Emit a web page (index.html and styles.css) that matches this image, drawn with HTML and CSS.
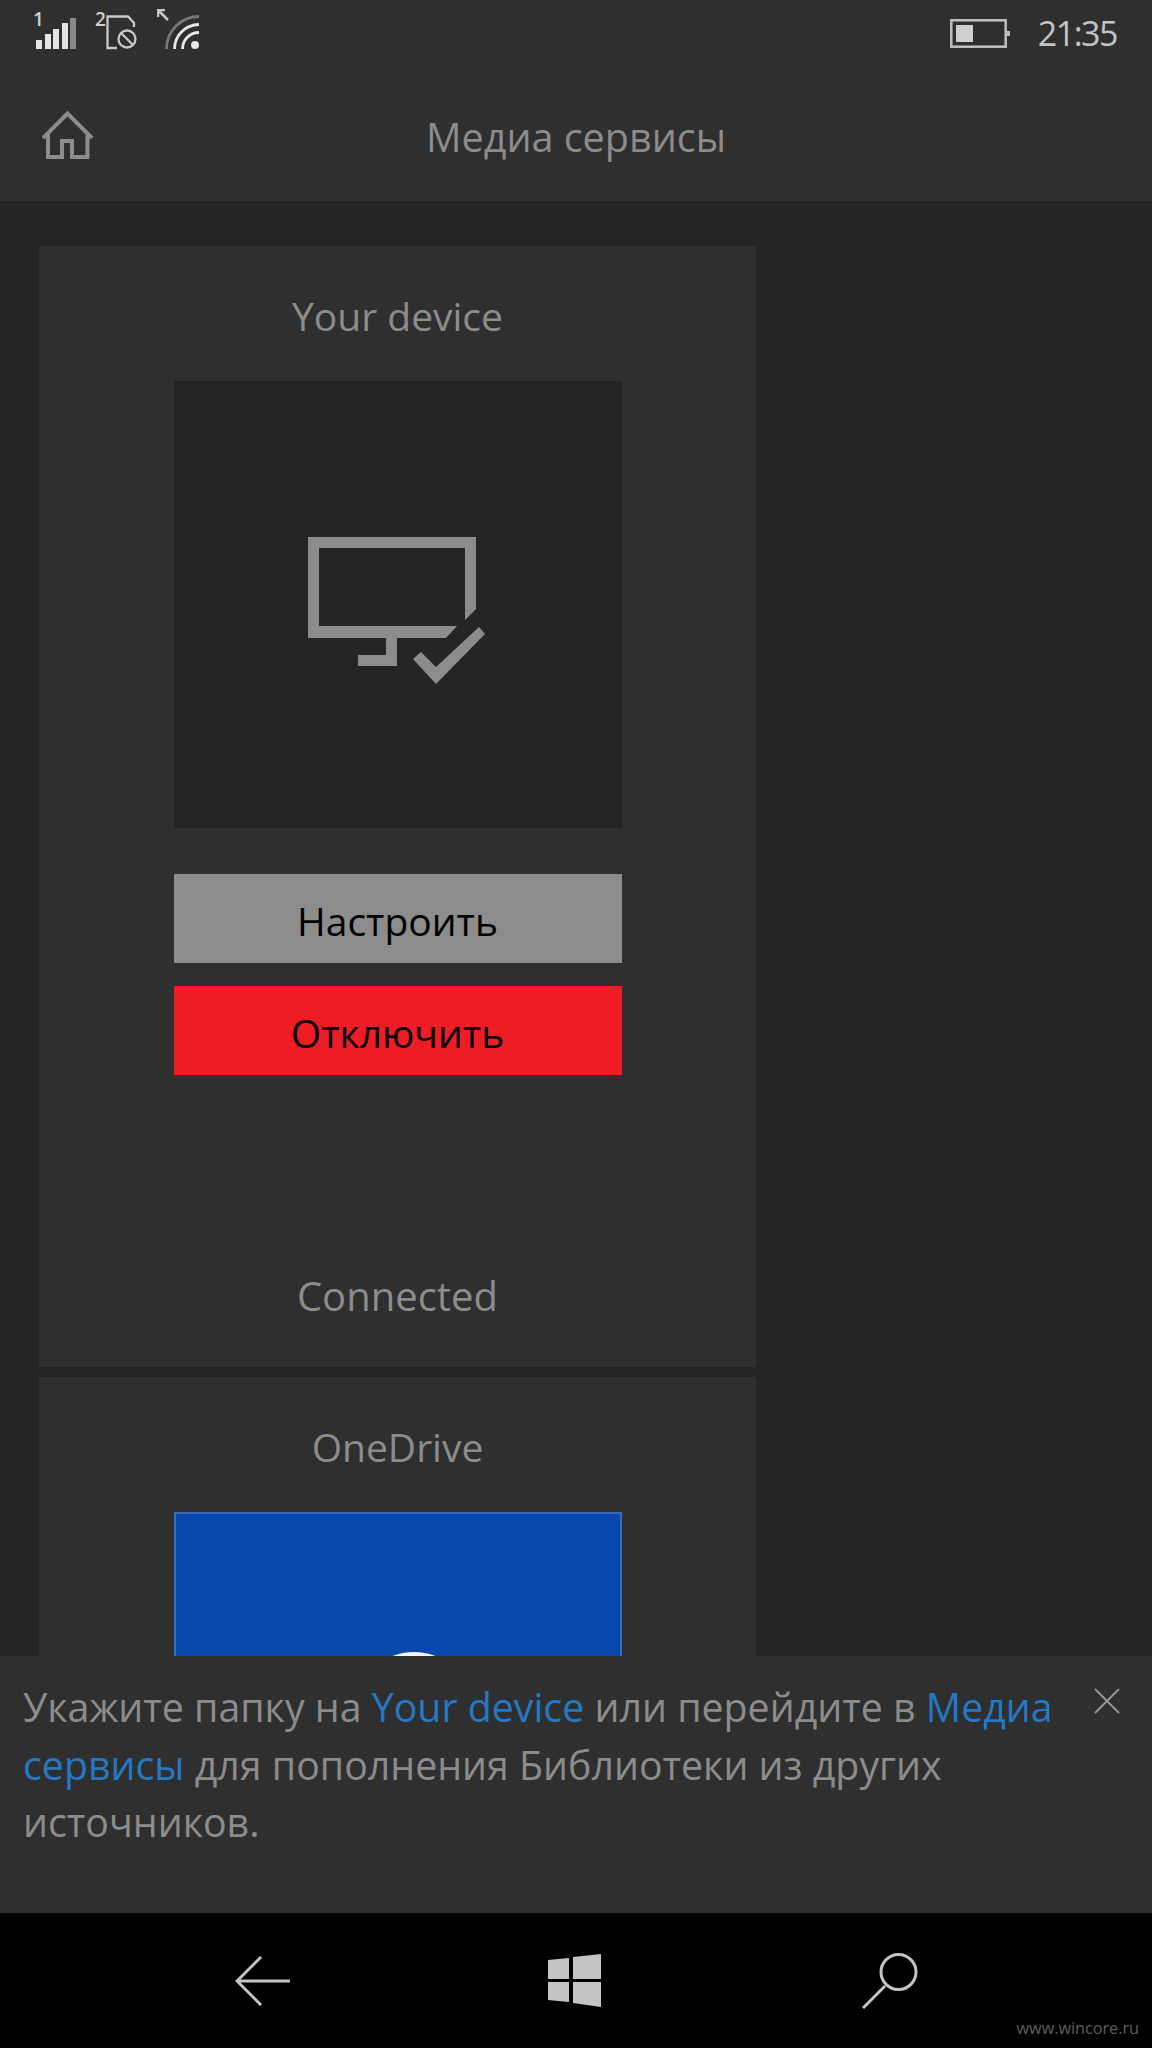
FILE: index.html
```html
<!DOCTYPE html>
<html lang="ru">
<head>
<meta charset="utf-8">
<title>Медиа сервисы</title>
<link rel="stylesheet" href="styles.css">
</head>
<body>
<div class="phone">
  <header class="top">
    <div class="status">
      <div class="status-left">
        <div class="sig">
          <span class="num">1</span>
          <svg width="40" height="31" viewBox="0 0 40 31"><g fill="#e4e4e4"><rect x="0" y="22" width="6" height="9"/><rect x="9" y="16" width="6" height="15"/><rect x="17" y="11" width="6" height="20"/><rect x="26" y="5" width="6" height="26"/></g><rect x="34" y="0" width="6" height="31" fill="#8a8a8a"/></svg>
        </div>
        <div class="sig sim">
          <span class="num">2</span>
          <svg width="32" height="35" viewBox="0 0 32 35" fill="none" stroke="#c8c8c8" stroke-width="2.300"><path d="M11 33H1.500V1.500H22L28 8V12"/><circle cx="21" cy="24" r="8.500"/><path d="M15 18L27 30"/></svg>
        </div>
        <div class="wifi">
          <svg width="42" height="40" viewBox="0 0 42 40" fill="none"><path d="M1 1L11 11M1 8V1H8" stroke="#c8c8c8" stroke-width="2.500"/><path d="M42 7.500A32.500 32.500 0 0 0 9.500 40" stroke="#777" stroke-width="2.800"/><path d="M42 15.500A24.500 24.500 0 0 0 17.500 40" stroke="#e6e6e6" stroke-width="2.800"/><path d="M42 23.500A16.500 16.500 0 0 0 25.500 40" stroke="#e6e6e6" stroke-width="2.800"/><circle cx="38" cy="36" r="4" fill="#e6e6e6"/></svg>
        </div>
      </div>
      <div class="status-right">
        <svg width="60" height="29" viewBox="0 0 60 29"><rect x="1.300" y="1.300" width="54.400" height="26.400" fill="none" stroke="#c0c0c0" stroke-width="2.500"/><rect x="6" y="6" width="17" height="17" fill="#cfcfcf"/><rect x="57" y="12" width="3" height="5" fill="#c0c0c0"/></svg>
        <span class="clock">21:35</span>
      </div>
    </div>
    <div class="titlebar">
      <svg class="home" width="52" height="48" viewBox="0 0 52 48" fill="none" stroke="#8c8c8c" stroke-width="4"><path d="M1 27L25.500 2.500L50 27"/><path d="M6 22.500V46H20V30H30V46H45.500V22.500"/></svg>
      <h1 class="page-title">Медиа сервисы</h1>
    </div>
  </header>

  <main class="content">
    <section class="card card-device">
      <h2 class="card-title">Your device</h2>
      <div class="tile">
        <svg width="178" height="148" viewBox="0 0 178 148" fill="#8c8c8c"><path d="M0 0H168V72L157 83V11H11V89H149L138 101H89V129H50V118H78V101H0Z"/><path d="M105 122L113 115L128 130L171 90L177 97L128 147Z"/></svg>
      </div>
      <div class="btn btn-grey">Настроить</div>
      <div class="btn btn-red">Отключить</div>
      <div class="card-state">Connected</div>
    </section>
    <section class="card">
      <h2 class="card-title">OneDrive</h2>
      <div class="tile tile-blue"><span class="cloud"></span></div>
    </section>
  </main>

  <aside class="notice">
    <p class="notice-text">Укажите папку на <a class="lnk">Your device</a> или перейдите в <a class="lnk">Медиа</a> <a class="lnk">сервисы</a> <span>для пополнения Библиотеки из других</span> <span>источников.</span></p>
    <svg class="close" width="26" height="26" viewBox="0 0 26 26" stroke="#9a9a9a" stroke-width="1.800"><path d="M1 1L25 25M25 1L1 25"/></svg>
  </aside>

  <nav class="navbar">
    <svg width="55" height="50" viewBox="0 0 55 50" fill="none" stroke="#c4c4c4" stroke-width="3"><path d="M26 1L2 25L26 49M2 25H55"/></svg>
    <svg class="nav-win" width="53" height="53" viewBox="0 0 53 53" fill="#c4c4c4"><path d="M0 6L21 4V25H0ZM25 3L53 0V25H25ZM0 28H21V48L0 46ZM25 28H53V53L25 49Z"/></svg>
    <svg class="nav-search" width="56" height="56" viewBox="0 0 56 56" fill="none" stroke="#c4c4c4" stroke-width="3"><circle cx="36.500" cy="19" r="17.500"/><path d="M23 33L1 55"/></svg>
  </nav>
  <span class="watermark">www.wincore.ru</span>
</div>
</body>
</html>
```
FILE: styles.css
```css
* { box-sizing: border-box; }
html, body { margin: 0; padding: 0; background: #000; }
body { font-family: "Open Sans", "Noto Sans", sans-serif; }
.phone { position: relative; width: 1152px; height: 2048px; display: flex; flex-direction: column; overflow: hidden; background: #252525; }
.top { height: 201px; flex: none; background: #2f2f2f; }
.status { height: 66px; display: flex; justify-content: space-between; padding: 10px 35px 0 33px; }
.status-left { display: flex; gap: 16px; }
.sig { position: relative; width: 46px; height: 40px; padding: 8px 0 0 3px; }
.sim { padding: 5px 0 0 11px; }
.num { position: absolute; left: 0; top: -3px; font-size: 19px; font-weight: 600; color: #d0d0d0; line-height: 24px; }
.wifi { margin-top: -1px; }
.status-right { display: flex; align-items: flex-start; gap: 28px; padding-top: 9px; }
.clock { font-size: 34px; line-height: 40px; letter-spacing: -1.500px; color: #c4c4c4; margin-top: -6px; }
.titlebar { position: relative; height: 135px; display: flex; align-items: center; justify-content: center; padding-top: 6px; }
.home { position: absolute; left: 42px; top: 45px; }
.page-title { margin: 0; font-size: 39.500px; font-weight: 400; color: #8c8c8c; line-height: 50px; }
.content { flex: 1; min-height: 0; overflow: hidden; padding: 45px 0 0 39px; display: flex; flex-direction: column; gap: 10px; }
.card { flex: none; width: 717px; background: #2f2f2f; display: flex; flex-direction: column; align-items: center; }
.card-device { height: 1121px; }
.card-title { margin: 45px 0 0; height: 90px; font-size: 39px; font-weight: 400; line-height: 50px; color: #8c8c8c; }
.tile { width: 448px; height: 447px; flex: none; background: #252525; display: flex; align-items: center; justify-content: center; }
.tile svg { margin-left: -2px; margin-top: 12px; }
.btn { width: 448px; height: 89px; flex: none; display: flex; align-items: center; justify-content: center; padding-top: 3px; font-size: 39px; color: #000; }
.btn-grey { margin-top: 46px; background: #8c8c8c; }
.btn-red { margin-top: 23px; background: #ee1c25; }
.card-state { margin-top: 196px; font-size: 40px; line-height: 50px; color: #8c8c8c; }
.tile-blue { position: relative; background: #0848ad; border: 2px solid #3a6cbd; border-width: 2px 2px 0; overflow: hidden; }
.cloud { position: absolute; left: 178px; top: 138px; width: 120px; height: 120px; border-radius: 50%; background: #f2f4fa; }
.notice { position: relative; flex: none; height: 257px; background: #2f2f2f; padding: 23px 80px 0 23px; }
.notice-text { margin: 0; font-size: 39.300px; line-height: 57.500px; color: #8c8c8c; }
.lnk { color: #2578c4; }
.close { position: absolute; left: 1094px; top: 32px; }
.navbar { flex: none; height: 135px; background: #000; position: relative; display: flex; align-items: center; gap: 258px; padding-left: 235px; }
.nav-search { margin-left: 3px; }
.watermark { position: absolute; right: 13px; bottom: 9px; font-size: 16.200px; line-height: 22px; color: #5e5e5e; }
```
